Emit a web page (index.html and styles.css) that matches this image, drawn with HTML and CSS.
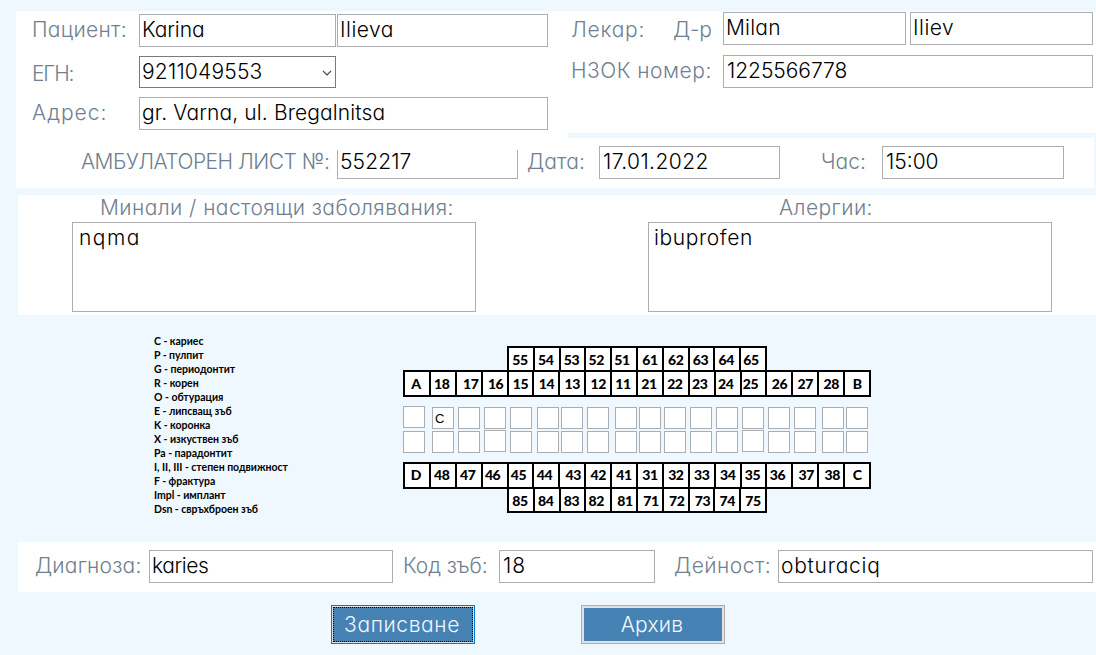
FILE: index.html
```html
<!DOCTYPE html>
<html lang="bg">
<head>
<meta charset="utf-8">
<title>Амбулаторен лист</title>
<link rel="stylesheet" href="styles.css">
</head>
<body>
<div class="people">
  <section class="patient">
    <div class="row">
      <label class="lbl t3">Пациент:</label>
      <div class="field first-name">Karina</div>
      <div class="field last-name t5">Ilieva</div>
    </div>
    <div class="row row-egn">
      <label class="lbl lbl-egn">ЕГН:</label>
      <div class="field combo t2">9211049553
        <svg class="chev" width="10" height="6" viewBox="0 0 10 6"><path d="M1 1l4 4 4-4" fill="none" stroke="#444" stroke-width="1.1"/></svg>
      </div>
    </div>
    <div class="row row-address">
      <label class="lbl t10">Адрес:</label>
      <div class="field address t1">gr. Varna, ul. Bregalnitsa</div>
    </div>
  </section>
  <section class="doctor">
    <div class="row">
      <label class="lbl lbl-doc t7">Лекар:</label>
      <label class="lbl lbl-dr tm2">Д-р</label>
      <div class="field doc-name t2">Milan</div>
      <div class="field doc-name doc-last t5">Iliev</div>
    </div>
    <div class="row row-nzok">
      <label class="lbl lbl-nzok t5">НЗОК номер:</label>
      <div class="field nzok">1225566778</div>
    </div>
  </section>
</div>
<section class="sheet">
  <label class="lbl lbl-sheet">АМБУЛАТОРЕН ЛИСТ №:</label>
  <div class="field sheet-no t1">552217</div>
  <label class="lbl lbl-date t1">Дата:</label>
  <div class="field date t4">17.01.2022</div>
  <label class="lbl lbl-hour">Час:</label>
  <div class="field hour">15:00</div>
</section>
<section class="history">
  <div class="note">
    <label class="lbl title title-past t4">Минали / настоящи заболявания:</label>
    <div class="field area area-past">nqma</div>
  </div>
  <div class="note">
    <label class="lbl title title-allergy t4">Алергии:</label>
    <div class="field area area-allergy t6">ibuprofen</div>
  </div>
</section>
<section class="dental">
  <ul class="legend">
    <li>C - кариес</li><li>P - пулпит</li><li>G - периодонтит</li><li>R - корен</li><li>O - обтурация</li><li>E - липсващ зъб</li><li>K - коронка</li><li>X - изкуствен зъб</li><li>Pa - парадонтит</li><li>I, II, III - степен подвижност</li><li>F - фрактура</li><li>Impl - имплант</li><li>Dsn - свръхброен зъб</li>
  </ul>
  <div class="chart">
    <div class="teeth milk milk-top"><b class="l1">55</b><b class="l1">54</b><b class="l1">53</b><b class="l2">52</b><b class="l2">51</b><b>61</b><b>62</b><b class="l1">63</b><b class="l1">64</b><b class="l2">65</b></div>
    <div class="teeth full full-top"><b class="l1 quad">A</b><b class="l1">18</b><b class="r2">17</b><b class="r1">16</b><b>15</b><b>14</b><b>13</b><b>12</b><b class="l1">11</b><b class="l1">21</b><b class="l1">22</b><b class="l2">23</b><b class="l2">24</b><b class="l3">25</b><b>26</b><b>27</b><b>28</b><b class="quad">B</b></div>
    <div class="marks marks-top"><i class="up"></i><i>C</i><i></i><i></i><i></i><i></i><i></i><i></i><i></i><i></i><i></i><i></i><i></i><i></i><i></i><i></i><i></i><i></i></div>
    <div class="marks"><i></i><i></i><i></i><i class="up"></i><i></i><i></i><i></i><i></i><i></i><i></i><i></i><i></i><i></i><i class="up"></i><i></i><i></i><i></i><i></i></div>
    <div class="teeth full full-bottom"><b class="l1">D</b><b class="l1">48</b><b class="l1">47</b><b class="l2">46</b><b class="l2">45</b><b class="l2">44</b><b class="r1">43</b><b>42</b><b>41</b><b>31</b><b>32</b><b>33</b><b>34</b><b class="l1">35</b><b class="l2">36</b><b class="r1">37</b><b class="r1">38</b><b>C</b></div>
    <div class="teeth milk milk-bottom"><b class="l1">85</b><b class="l1">84</b><b class="l1">83</b><b class="l2">82</b><b class="r1">81</b><b class="r1">71</b><b class="r1">72</b><b class="r1">73</b><b>74</b><b>75</b></div>
  </div>
</section>
<section class="diagnosis">
  <label class="lbl lbl-diag t2">Диагноза:</label>
  <div class="field diag">karies</div>
  <label class="lbl lbl-code">Код зъб:</label>
  <div class="field code t10">18</div>
  <label class="lbl lbl-act t5">Дейност:</label>
  <div class="field act t7">obturaciq</div>
</section>
<div class="actions">
  <button class="btn btn-save"><span class="face t6">Записване</span></button>
  <button class="btn btn-archive"><span class="face t2">Архив</span></button>
</div>
</body>
</html>
```
FILE: styles.css
```css
* { box-sizing: border-box; }
body {
  margin: 0;
  width: 1096px;
  height: 655px;
  overflow: hidden;
  background: #f0f8ff;
  color: #000;
  font: 300 21px/26px Inter, "Liberation Sans", sans-serif;
  font-feature-settings: "cv11";
  white-space: nowrap;
}

/* labels and fields */
.lbl { display: block; flex: none; color: #708090; padding-top: 3px; }
.field {
  flex: none;
  height: 33px;
  padding: 2px 2px 0;
  background: #fff;
  border: 1px solid #abadb3;
}
.row { display: flex; }

/* tracking steps */
.tm2 { letter-spacing: -.2px; }
.t1 { letter-spacing: .12px; }
.t2 { letter-spacing: .2px; }
.t3 { letter-spacing: .33px; }
.t4 { letter-spacing: .42px; }
.t5 { letter-spacing: .5px; }
.t6 { letter-spacing: .6px; }
.t7 { letter-spacing: .75px; }
.t10 { letter-spacing: 1px; }

/* patient and doctor */
.people { display: flex; align-items: flex-start; padding: 11px 0 0 16px; }
.patient { width: 552px; height: 127px; padding: 3px 0 0 16px; background: #fff; }
.patient .lbl { width: 107px; }
.first-name { width: 197px; margin-right: 1px; letter-spacing: -.1px; }
.last-name { width: 211px; }
.row-egn { margin-top: 9px; }
.patient .lbl-egn { padding-top: 5px; letter-spacing: -1.2px; }
.combo { display: flex; justify-content: space-between; align-items: flex-start; width: 197px; height: 32px; border-color: #7a7a7a; }
.chev { margin: 11px 1px 0 0; }
.row-address { margin-top: 9px; }
.address { width: 409px; }
.doctor { width: 528px; height: 122px; padding: 1px 0 0 3px; background: #fff; }
.lbl-doc { width: 102px; padding-top: 5px; }
.lbl-dr { width: 50px; padding-top: 5px; }
.doc-name { width: 183px; }
.doc-last { margin-left: 4px; }
.row-nzok { margin-top: 10px; }
.lbl-nzok { width: 152px; }
.nzok { width: 370px; padding-left: 3px; letter-spacing: -.05px; }

/* ambulatory sheet */
.sheet { display: flex; width: 1078px; height: 50px; margin-left: 16px; padding: 8px 0 0 65px; background: #fff; }
.lbl-sheet { width: 256px; letter-spacing: -.52px; }
.sheet-no { width: 181px; height: 29px; margin-top: 4px; padding-top: 0; border-top: 0; line-height: 24px; }
.lbl-date { width: 81px; padding-left: 9px; }
.date { width: 181px; padding-left: 3px; }
.lbl-hour { width: 102px; padding-left: 41px; }
.hour { width: 182px; padding-left: 3px; }

/* medical history */
.history { display: flex; gap: 172px; height: 120px; margin: 7px 0 0 18px; padding-left: 54px; background: #fff; }
.title { height: 27px; padding-top: 0; }
.title-past { padding-left: 28px; }
.title-allergy { padding-left: 131px; }
.area { width: 404px; height: 90px; padding: 2px 5px; }
.area-past { padding-left: 6px; letter-spacing: 1.5px; }

/* dental chart */
.dental { display: flex; height: 227px; padding-left: 154px; }
.legend { width: 249px; margin: 0; padding: 19px 0 0; list-style: none; font: 700 10.5px/14px Lato, sans-serif; letter-spacing: -.03px; }
.chart { width: 468px; padding-top: 31px; }
.teeth {
  display: flex;
  border: 2px solid #000;
  border-left: 0;
  background: #fff;
  font: 700 14px/23px Lato, sans-serif;
  letter-spacing: -.4px;
}
.teeth b { flex: 1 1 0; border-left: 2px solid #000; text-align: center; }
.milk { width: 260px; margin-left: 104px; height: 26px; }
.milk-top { line-height: 24px; }
.full { height: 27px; }
.full-top { margin-top: -2px; line-height: 24px; }
.full-bottom { margin-top: 7px; line-height: 22px; }
.milk-bottom { margin-top: -2px; }
.teeth .l1 { text-indent: -2px; }
.teeth .l2 { text-indent: -4px; }
.teeth .l3 { text-indent: -6px; }
.teeth .r1 { text-indent: 2px; }
.teeth .r2 { text-indent: 4px; }
.marks {
  display: grid;
  grid-template-columns: 29px 26px 26px 26px 27px 24px 26px 28px 24px 25px 26px 26px 26px 26px 26px 28px 24px 22px;
  height: 24px;
}
.marks-top { margin-top: 10px; }
.marks i {
  width: 22px;
  height: 22px;
  padding-left: 2px;
  background: #fff;
  border: 1px solid #abadb3;
  font: normal 400 13px/21px "Liberation Sans", sans-serif;
}
.marks .up { margin-top: -1px; }

/* diagnosis */
.diagnosis { display: flex; height: 50px; margin-left: 18px; padding: 8px 0 0 17px; background: #fff; }
.lbl-diag { width: 114px; }
.diag { width: 244px; letter-spacing: -.4px; }
.lbl-code { width: 106px; padding-left: 10px; letter-spacing: -.1px; }
.code { width: 156px; padding-left: 3px; }
.lbl-act { width: 123px; padding-left: 19px; }
.act { width: 315px; }

/* buttons */
.actions { display: flex; gap: 106px; padding: 13px 0 0 331px; }
.btn {
  width: 144px;
  height: 39px;
  padding: 1px;
  border: 1px solid #adadad;
  background: #e1e1e1;
  color: #f0f8ff;
  font: inherit;
}
.face { display: block; height: 35px; padding-right: 2px; border: 1px solid #e1e1e1; background: #4682b4; background-clip: padding-box; line-height: 33px; }
.btn-save { border-color: #0078d7; }
.btn-save .face { border: 1px dotted #000; background-clip: border-box; }
```
